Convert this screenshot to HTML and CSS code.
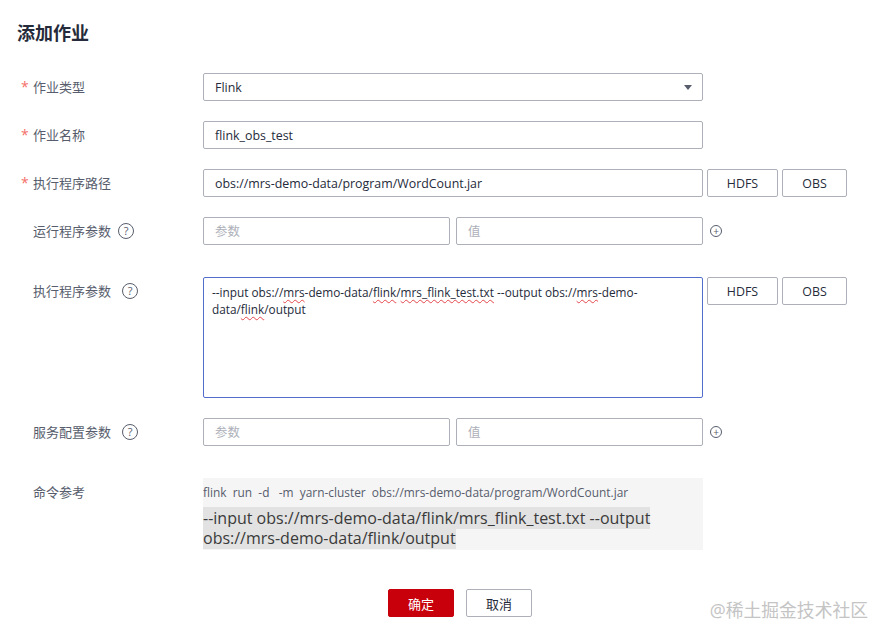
FILE: index.html
```html
<!DOCTYPE html>
<html lang="zh-CN">
<head>
  <meta charset="UTF-8">
  <meta name="viewport" content="width=device-width, initial-scale=1.0">
  <title>添加作业</title>
  <link rel="stylesheet" href="styles.css">
</head>
<body>

  <div class="page">
    <p class="title">添加作业</p>

    <div class="form">
      <div class="row">
        <div class="label"><span class="star">*</span>作业类型</div>
        <div class="field select">
          Flink
          <span class="caret"></span>
        </div>
      </div>

      <div class="row">
        <div class="label"><span class="star">*</span>作业名称</div>
        <div class="field">flink_obs_test</div>
      </div>

      <div class="row">
        <div class="label"><span class="star">*</span>执行程序路径</div>
        <div class="field">obs://mrs-demo-data/program/WordCount.jar</div>
        <button class="side-button hdfs-button">HDFS</button>
        <button class="side-button obs-button">OBS</button>
      </div>

      <div class="row row-loose">
        <div class="label">运行程序参数 <span class="help help-near">?</span></div>
        <div class="pair">
          <div class="field half placeholder">参数</div>
          <div class="field half placeholder">值</div>
        </div>
        <span class="plus">+</span>
      </div>

      <div class="row">
        <div class="label">执行程序参数 <span class="help">?</span></div>
        <div class="field textarea">--input obs://<span class="typo">mrs</span>-demo-data/<span class="typo">flink</span>/<span class="typo">mrs_flink_test.txt</span> --output obs://<span class="typo">mrs</span>-demo-<br>data/<span class="typo">flink</span>/output</div>
        <button class="side-button hdfs-button">HDFS</button>
        <button class="side-button obs-button">OBS</button>
      </div>

      <div class="row row-loose">
        <div class="label">服务配置参数 <span class="help">?</span></div>
        <div class="pair">
          <div class="field half placeholder">参数</div>
          <div class="field half placeholder">值</div>
        </div>
        <span class="plus">+</span>
      </div>

      <div class="row row-last">
        <div class="label">命令参考</div>
        <div class="command">
          <p class="command-head">flink&nbsp; run&nbsp; -d&nbsp; &nbsp;-m&nbsp; yarn-cluster&nbsp; obs://mrs-demo-data/program/WordCount.jar</p>
          <p class="command-args"><span class="mark">--input obs://mrs-demo-data/flink/mrs_flink_test.txt --output</span><br><span class="mark">obs://mrs-demo-data/flink/output</span></p>
        </div>
      </div>

      <div class="actions">
        <button class="ok-button">确定</button>
        <button class="cancel-button">取消</button>
      </div>
    </div>

    <p class="watermark">@稀土掘金技术社区</p>
  </div>

</body>
</html>
```

FILE: styles.css
```css
body {
  margin: 0;
  background-color: white;
  color: #252b3a;
  font-family: "Open Sans", "Noto Sans CJK SC", sans-serif;
  font-size: 13px;
}

.page {
  position: relative;
  height: 638px;
  padding: 20px 0 0 17px;
  box-sizing: border-box;
}

.title {
  margin: 0;
  font-size: 18px;
  font-weight: bold;
  line-height: 26px;
  color: #252b3a;
}

.form {
  margin-top: 27px;
}

.row {
  display: flex;
  align-items: flex-start;
  margin-bottom: 20px;
}

.row-loose {
  margin-bottom: 32px;
}

.row-last {
  margin-bottom: 39px;
}

.label {
  width: 186px;
  padding-left: 16px;
  box-sizing: border-box;
  line-height: 28px;
  color: #575d6c;
  display: flex;
  align-items: center;
}

.star {
  width: 12px;
  margin-left: -12px;
  color: #f66f6a;
  font-size: 14px;
}

.help {
  width: 14px;
  height: 14px;
  margin-left: 11px;
  border: 1.3px solid #575d6c;
  border-radius: 50%;
  font-size: 11px;
  line-height: 14px;
  text-align: center;
  color: #575d6c;
}

.help-near {
  margin-left: 7px;
}

.field {
  width: 500px;
  height: 28px;
  box-sizing: border-box;
  border: 1px solid #adb0b8;
  border-radius: 2px;
  padding: 1px 0 0 11px;
  font-size: 12.4px;
  line-height: 26px;
  white-space: nowrap;
}

.select {
  position: relative;
}

.caret {
  position: absolute;
  right: 10px;
  top: 11px;
  border-left: 4px solid transparent;
  border-right: 4px solid transparent;
  border-top: 5px solid #575d6c;
}

.pair {
  display: flex;
  gap: 6px;
  width: 500px;
}

.half {
  width: 247px;
}

.placeholder {
  color: #adb0b8;
}

.plus {
  width: 10px;
  height: 10px;
  margin: 8px 0 0 7px;
  border: 1px solid #575d6c;
  border-radius: 50%;
  font-size: 10px;
  line-height: 10px;
  text-align: center;
  color: #575d6c;
}

.textarea {
  height: 121px;
  padding: 6px 8px;
  font-size: 11.8px;
  line-height: 17px;
  border-color: #526ecc;
}

.typo {
  text-decoration: underline wavy #e5484d;
  text-decoration-thickness: 1px;
  text-underline-offset: 2px;
}

.side-button {
  height: 28px;
  margin-left: 4px;
  background-color: white;
  border: 1px solid #adb0b8;
  border-radius: 2px;
  font-family: inherit;
  font-size: 12.4px;
  color: #252b3a;
  cursor: pointer;
}

.hdfs-button {
  width: 71px;
}

.obs-button {
  width: 65px;
}

.command {
  width: 500px;
  padding-bottom: 2px;
  background-color: #f5f5f6;
}

.command-head {
  margin: 0 0 2px;
  font-size: 11.9px;
  line-height: 28px;
  color: #575d6c;
  white-space: nowrap;
}

.command-args {
  margin: 0;
  font-size: 16px;
  line-height: 20px;
  color: #3a3a3a;
  white-space: nowrap;
}

.mark {
  background-color: #e2e2e2;
}

.actions {
  display: flex;
  gap: 12px;
  padding-left: 371px;
}

.ok-button,
.cancel-button {
  height: 28px;
  border-radius: 2px;
  font-family: inherit;
  font-size: 13px;
  cursor: pointer;
}

.ok-button {
  width: 66px;
  background-color: #c7000b;
  border: 1px solid #c7000b;
  color: white;
}

.cancel-button {
  width: 66px;
  background-color: white;
  border: 1px solid #adb0b8;
  color: #252b3a;
}

.watermark {
  position: absolute;
  right: 21px;
  top: 596px;
  margin: 0;
  font-size: 17.8px;
  color: #c4c4c4;
}
```
